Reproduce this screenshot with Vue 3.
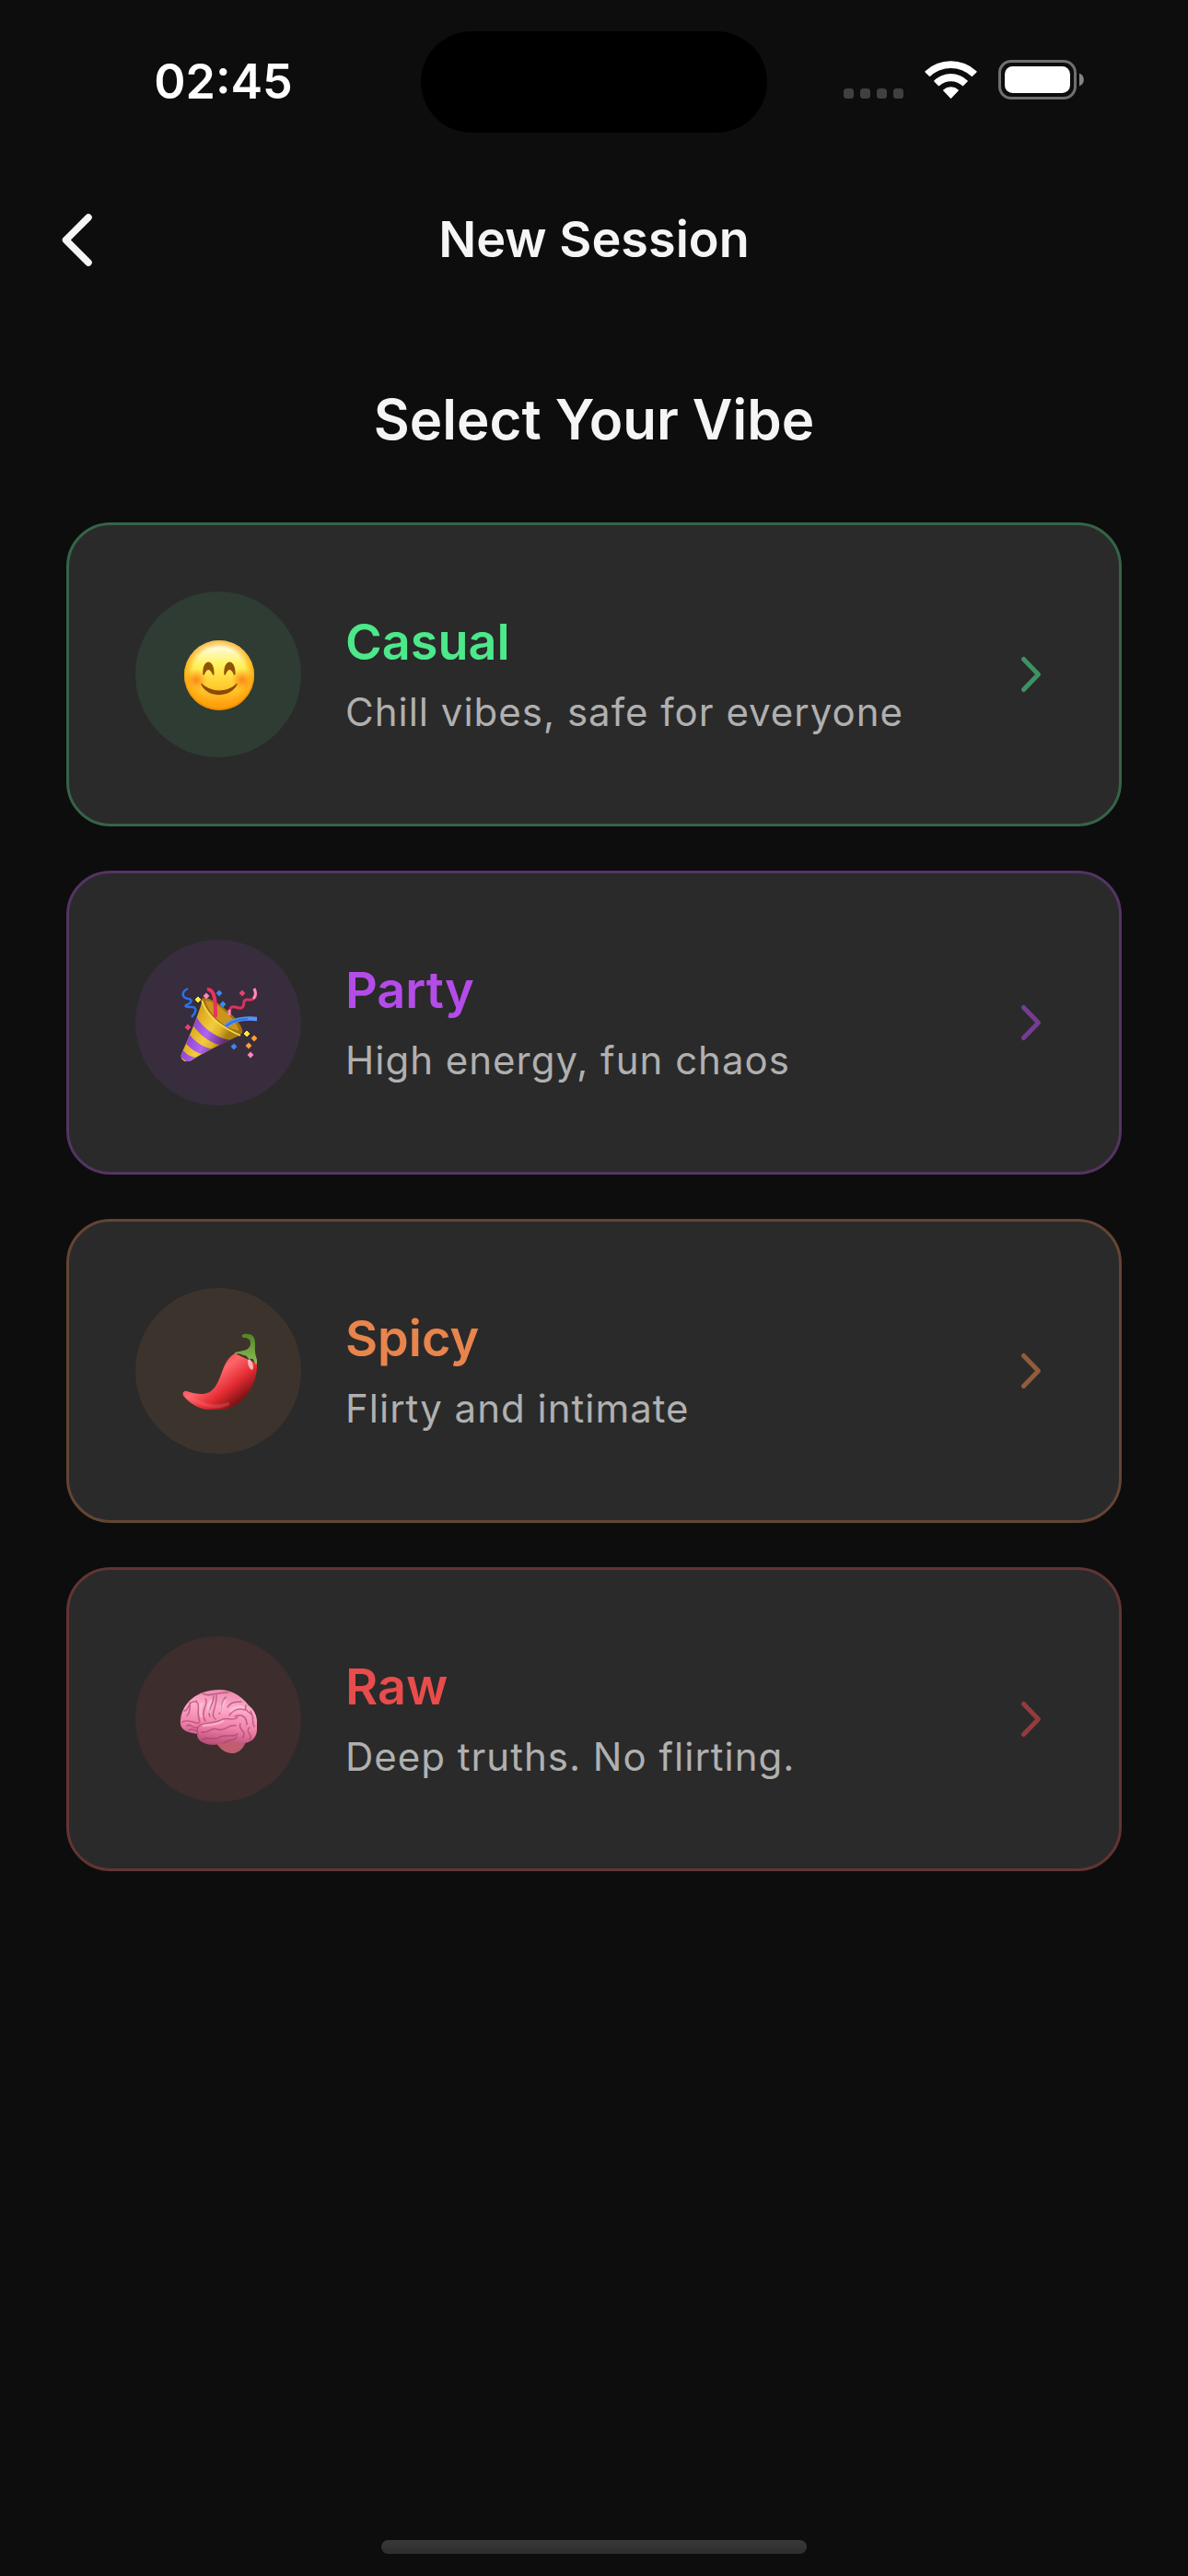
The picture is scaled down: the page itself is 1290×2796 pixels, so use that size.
<script setup>
const vibes = [
  { id: 'casual', name: 'Casual', text: 'Chill vibes, safe for everyone' },
  { id: 'party', name: 'Party', text: 'High energy, fun chaos' },
  { id: 'spicy', name: 'Spicy', text: 'Flirty and intimate' },
  { id: 'raw', name: 'Raw', text: 'Deep truths. No flirting.' },
]
</script>

<template>
  <div class="screen">
    <div class="status">
      <div class="time">02:45</div>
      <div class="island"></div>
      <div class="indicators">
        <svg class="dots" width="65" height="43" viewBox="0 0 65 43" fill="#404040" aria-hidden="true">
          <rect v-for="i in 4" :key="i" :x="(i - 1) * 18" y="31" width="11" height="11" rx="3.5" />
        </svg>
        <svg width="57" height="43" viewBox="0 0 57 43" fill="#fff" aria-hidden="true">
          <path d="M.6 12.2Q0 12.8.6 13.4L5 17.8Q5.600 18.400 6.200 17.800A32.500 32.500 0 0 1 50.800 17.800Q51.400 18.400 52 17.800L56.400 13.400Q57 12.800 56.400 12.200A41 41 0 0 0 .6 12.200Z" />
          <path d="M10.400 22.400Q9.800 23 10.400 23.600L14.900 28.100Q15.500 28.700 16.100 28.100A18.500 18.500 0 0 1 40.900 28.100Q41.500 28.700 42.100 28.100L46.600 23.600Q47.200 23 46.600 22.400A26 26 0 0 0 10.400 22.400Z" />
          <path d="M20.300 32.400Q19.700 33 20.300 33.600L27.900 41.600Q28.500 42.200 29.100 41.600L36.700 33.600Q37.300 33 36.700 32.400A12.500 12.500 0 0 0 20.300 32.400Z" />
        </svg>
        <svg width="94" height="43" viewBox="0 0 94 43" aria-hidden="true">
          <rect x="1.500" y="1.500" width="82" height="40" rx="12.500" fill="none" stroke="#707070" stroke-width="3" />
          <rect x="7" y="7" width="71" height="29" rx="8.500" fill="#fff" />
          <path d="M88 14.500a7.500 7.500 0 0 1 0 14z" fill="#858585" />
        </svg>
      </div>
    </div>

    <header class="nav">
      <button class="back" type="button" aria-label="Back">
        <svg width="36" height="60" viewBox="0 0 36 60" fill="none" stroke="#f5f5f5" stroke-width="7.500" stroke-linecap="round" stroke-linejoin="round" aria-hidden="true">
          <path d="M31 6 6.500 30.500 31 55" />
        </svg>
      </button>
      <h1>New Session</h1>
    </header>

    <main>
      <h2>Select Your Vibe</h2>
      <button v-for="v in vibes" :key="v.id" type="button" class="card" :class="v.id">
        <span class="badge">
          <svg v-if="v.id === 'casual'" width="84" height="84" viewBox="0 0 84 84" aria-hidden="true">
            <defs>
              <linearGradient id="face" x1="0" y1="0" x2="0" y2="1">
                <stop offset="0" stop-color="#fff8c8" />
                <stop offset=".12" stop-color="#fffbd0" />
                <stop offset=".36" stop-color="#fff15a" />
                <stop offset=".62" stop-color="#ffd034" />
                <stop offset=".88" stop-color="#ffaa18" />
                <stop offset="1" stop-color="#ef8f08" />
              </linearGradient>
              <radialGradient id="rim" cx=".5" cy=".48" r=".52">
                <stop offset=".72" stop-color="#ff9a00" stop-opacity="0" />
                <stop offset=".92" stop-color="#ffa408" stop-opacity=".75" />
                <stop offset="1" stop-color="#e27c00" />
              </radialGradient>
              <radialGradient id="blush">
                <stop offset="0" stop-color="#ff7a10" stop-opacity=".9" />
                <stop offset="1" stop-color="#ff8a10" stop-opacity="0" />
              </radialGradient>
            </defs>
            <circle cx="43" cy="43" r="38" fill="url(#face)" />
            <circle cx="43" cy="43" r="38" fill="url(#rim)" />
            <circle cx="18" cy="48" r="12" fill="url(#blush)" />
            <circle cx="68" cy="48" r="12" fill="url(#blush)" />
            <path d="M25.300 42c-1-18 13-18 12.200 0-.5 1-1.500 1-2-.5-2.500-6-6-6-8.200 0-.6 1.500-1.600 1.500-2 .5zM48.300 42c-1-18 13-18 12.200 0-.5 1-1.500 1-2-.5-2.500-6-6-6-8.200 0-.6 1.500-1.600 1.500-2 .5z" fill="#8e5208" />
            <path d="M23.500 53c7 15 32 15 39 0 .6-1 .2-1.700-1-.7-10 9.500-27 9.500-37 0-1.200-1-1.600-.3-1 .7z" fill="#8a4b06" />
          </svg>
          <svg v-else-if="v.id === 'party'" width="84" height="84" viewBox="0 0 84 84" fill="none" aria-hidden="true">
            <defs>
              <linearGradient id="cone" x1="12" y1="46" x2="46" y2="66" gradientUnits="userSpaceOnUse">
                <stop offset="0" stop-color="#d9a51c" />
                <stop offset=".5" stop-color="#f3cc3e" />
                <stop offset=".75" stop-color="#e0b428" />
                <stop offset="1" stop-color="#a87d10" />
              </linearGradient>
              <linearGradient id="stripe" x1="10" y1="46" x2="50" y2="62" gradientUnits="userSpaceOnUse">
                <stop offset="0" stop-color="#8b3fc8" />
                <stop offset=".5" stop-color="#b065ee" />
                <stop offset="1" stop-color="#5e2b70" />
              </linearGradient>
              <clipPath id="coneClip"><path d="M25 17C20 35 8 63 2 76c-2 5 3 10 9 8 12-8 38-21 56-29C48 49 31 35 25 17z" /></clipPath>
            </defs>
            <path d="M24 16c8-7 48 26 44 37-1 3-9 4-18 0C38 47 22 27 24 16z" fill="#a4710f" />
            <path d="M28 18c10-1 37 23 36 33-7-2-13-4-19-9C37 35 30 27 28 18z" fill="#ca941d" />
            <g clip-path="url(#coneClip)">
              <path d="M25 14C20 35 8 63 0 76v10h12c12-8 38-21 58-31C48 49 31 35 25 14z" fill="url(#cone)" />
              <path d="M17 33c6 13 21 25 38 28l-8 6C33 65 19 53 12 41zM9 52c5 9 16 17 28 19l-9 6C17 75 9 68 4 61zM2 69c3 6 9 10 17 11l-7 6C6 84 2 80-1 76z" fill="url(#stripe)" />
            </g>
            <path d="M24 18c4 13 17 27 42 38" stroke="#f7dc55" stroke-width="1.500" />
            <path d="M30 6c9-1 9 15 9 30" stroke="#ec315f" stroke-width="4" />
            <path d="M50 46c9-9 24-9 35-8" stroke="#5792fa" stroke-width="4.500" />
            <path d="M50 46c8-7 16-8 24-8" stroke="#2f73e6" stroke-width="2" />
            <path d="M9 5c-8 4-6 10 0 11 6 1 4 5-2 7-2 2 2 2 7 2 6 1 3 7-1 11" stroke="#2872ec" stroke-width="2.500" />
            <path d="M81 5c4 10-1 13-7 12-7-1-2 8-7 9-4 2-13-8-13 8" stroke="#dd315f" stroke-width="3" />
            <path d="M81 5c3 6 1 9-1 11M54 28v6" stroke="#ff8eb4" stroke-width="3" />
            <path d="M20 14l3 3-3 3-3-3zM73 51l3 3-3 3-3-3z" fill="#ffe83d" stroke="#ffe83d" stroke-width="1" />
            <path d="M43 8l2 2-2 2-2-2zM47 20l2 2-2 2-2-2zM59 66l2 2-2 2-2-2z" fill="#3989f4" stroke="#3989f4" stroke-width="2" />
            <path d="M29 11l2 2-2 2-2-2zM77 75l2 2-2 2-2-2z" fill="#ff88b5" stroke="#ff88b5" stroke-width="2" />
            <path d="M68 8l2 2-2 2-2-2zM9 45l2 2-2 2-2-2z" fill="#e2436f" stroke="#e2436f" stroke-width="2" />
            <path d="M81 57l2 2-2 2-2-2zM75 65l2 2-2 2-2-2z" fill="#ff9f32" stroke="#ff9f32" stroke-width="2" />
          </svg>
          <svg v-else-if="v.id === 'spicy'" width="84" height="84" viewBox="0 0 84 84" aria-hidden="true">
            <defs>
              <linearGradient id="pod" x1="34" y1="38" x2="64" y2="76" gradientUnits="userSpaceOnUse">
                <stop offset="0" stop-color="#f0474c" />
                <stop offset=".2" stop-color="#ff676b" />
                <stop offset=".62" stop-color="#e32b32" />
                <stop offset="1" stop-color="#7c1214" />
              </linearGradient>
              <linearGradient id="cap" x1="0" y1="0" x2="0" y2="1">
                <stop offset="0" stop-color="#4f8526" />
                <stop offset="1" stop-color="#8fbd57" />
              </linearGradient>
            </defs>
            <path d="M60 23c-15 8-13 31-26 41-7 5-17 3-26 0-4-1-6 3-3 6 11 13 28 17 43 14 24-5 37-29 36-50z" fill="url(#pod)" />
            <path d="M6 66c13 12 31 18 46 12" fill="none" stroke="#ff7074" stroke-width="4" stroke-opacity=".3" stroke-linecap="round" />
            <ellipse cx="77" cy="35" rx="2.500" ry="6" fill="#ffd0ca" opacity=".8" transform="rotate(-18 77 35)" />
            <path d="M60 22c8-2 16-2 17-9 0-5-2-7-7-7-3 0-3-4 0-4 9-1 12 3 12 10 0 6-1 10 3 21l-2 2c-3-3-2-7-6-6-3 1-3-4-7-4-3 0-4-3-10-1z" fill="url(#cap)" />
          </svg>
          <svg v-else width="84" height="84" viewBox="0 0 84 84" fill="none" aria-hidden="true">
            <defs>
              <linearGradient id="lobe" x1="46" y1="8" x2="38" y2="70" gradientUnits="userSpaceOnUse">
                <stop offset="0" stop-color="#e98aad" />
                <stop offset=".3" stop-color="#ffabcb" />
                <stop offset=".65" stop-color="#ef80a8" />
                <stop offset="1" stop-color="#b04670" />
              </linearGradient>
            </defs>
            <g transform="translate(0 2)">
              <path d="M40 66c9 15 27 15 32-2l-4-6-28 2z" fill="#c05d70" />
              <path d="M1 42C2 22 20 8 43 8c15 0 25 8 32 17 9 7 10 17 9 26 0 8-5 14-14 15-9 0-17-3-23 0-9 4-28 2-28-10C7 54 0 51 1 42z" fill="url(#lobe)" />
              <g stroke="#a63f68" stroke-width="1.500" stroke-linecap="round" stroke-linejoin="round" opacity=".65">
                <path d="M5 31c6 0 3-11 12-10M8 36c2 0 4-9 3-14M3 43c8-4 16 3 18 1M22 43c-5-12 2-16-4-23M28 42c-7-10 5-20 0-24M33 37c-4-8 4-11 4-22M39 40c-7-5 2-12 1-26M25 12c6 5 17-2 28-1M43 34c6-5-1-9 7-18M52 27c5-7 9-5 15-6M54 36c4-6 9-9 17-6M60 37c7-3 13 0 13 9M72 25c-3 7 7 7 8 14M77 31c4 6 1 12 4 17" />
                <path d="M20 56c-5-15 13-9 25-15 7-4 12 2 18-3M24 54c8 2 9-6 17-3 9 3 12-6 20-4M25 62c7-4 12 2 18-2 5-5 14 1 20-4M48 66c4-5 11-1 14-7M66 45c-3 8 7 6 3 15M76 49c-6 5 5 8 0 13M8 47c5-3 6 4 11 2M10 52c5-3 7 2 9 0" />
              </g>
              <path d="M24 23c-2 5-2 9 0 14M34 20c-2 4-4 8-2 12M49 20c-3 5-3 8-4 12M56 31c5-5 9-5 13-4M26 47c8-1 15-1 21-5" stroke="#ffd0e2" stroke-width="3" stroke-linecap="round" opacity=".5" />
            </g>
          </svg>
        </span>
        <span class="copy">
          <span class="name">{{ v.name }}</span>
          <span class="text">{{ v.text }}</span>
        </span>
        <svg class="chevron" width="48" height="48" viewBox="0 0 48 48" fill="none" stroke="currentColor" stroke-width="5" stroke-linecap="round" stroke-linejoin="round" aria-hidden="true">
          <path d="M16.500 7.500 32.500 24l-16 16.500" />
        </svg>
      </button>
    </main>

    <div class="home"></div>
  </div>
</template>

<style>
body {
  background: #0d0d0d;
}
</style>

<style scoped>
.screen {
  display: flex;
  flex-direction: column;
  min-height: 100vh;
  box-sizing: border-box;
  background: #0d0d0d;
  color: #f5f5f5;
  font-family: Inter, sans-serif;
}
.status {
  display: grid;
  grid-template-columns: 1fr 376px 1fr;
  align-items: center;
  padding-top: 34px;
}
.time {
  padding-right: 28px;
  padding-left: 56px;
  color: #fff;
  font-size: 52px;
  font-weight: 600;
  line-height: 64px;
  text-align: center;
}
.island {
  height: 110px;
  border-radius: 55px;
  background: #000;
}
.indicators {
  display: flex;
  justify-content: flex-end;
  gap: 23px;
  padding-right: 112px;
  padding-bottom: 5px;
}
.nav {
  display: grid;
  grid-template-columns: 168px 1fr 168px;
  align-items: center;
  height: 168px;
  padding-top: 32px;
}
.back {
  display: flex;
  align-items: center;
  height: 144px;
  padding: 0 0 0 65px;
  border: 0;
  background: none;
}
h1,
h2 {
  margin: 0;
  font-weight: 600;
  text-align: center;
}
h1 {
  font-size: 54px;
  line-height: 72px;
}
main {
  display: flex;
  flex-direction: column;
  gap: 48px;
  padding: 75px 72px 0;
}
h2 {
  font-size: 60px;
  line-height: 72px;
  padding-bottom: 28px;
}
.card {
  display: flex;
  align-items: center;
  gap: 48px;
  padding: 72px;
  border: 3px solid;
  border-radius: 48px;
  background: #2a2a2a;
  font-family: inherit;
  text-align: left;
}
.badge {
  display: flex;
  align-items: center;
  justify-content: center;
  width: 180px;
  height: 180px;
  border-radius: 50%;
}
.copy {
  display: flex;
  flex: 1;
  flex-direction: column;
  gap: 16px;
}
.name {
  font-size: 54px;
  font-weight: 600;
  line-height: 66px;
}
.text {
  color: #b0b0b0;
  font-size: 42px;
  font-weight: 400;
  letter-spacing: 1px;
  line-height: 54px;
}
.casual { border-color: #356447; }
.casual .badge { background: #2e3c33; }
.casual .name { color: #4ce88a; }
.casual .chevron { color: #3c9361; }
.party { border-color: #543463; }
.party .badge { background: #382d3d; }
.party .name { color: #b44ce8; }
.party .chevron { color: #763c93; }
.spicy { border-color: #634534; }
.spicy .badge { background: #3d332d; }
.spicy .name { color: #e8844c; }
.spicy .chevron { color: #935b3c; }
.raw { border-color: #633434; }
.raw .badge { background: #3d2d2d; }
.raw .name { color: #e84c4c; }
.raw .chevron { color: #933c3c; }
.home {
  align-self: center;
  width: 462px;
  height: 15px;
  margin-top: auto;
  margin-bottom: 24px;
  border-radius: 8px;
  background: linear-gradient(#393939, #2d2d2d);
}
</style>
